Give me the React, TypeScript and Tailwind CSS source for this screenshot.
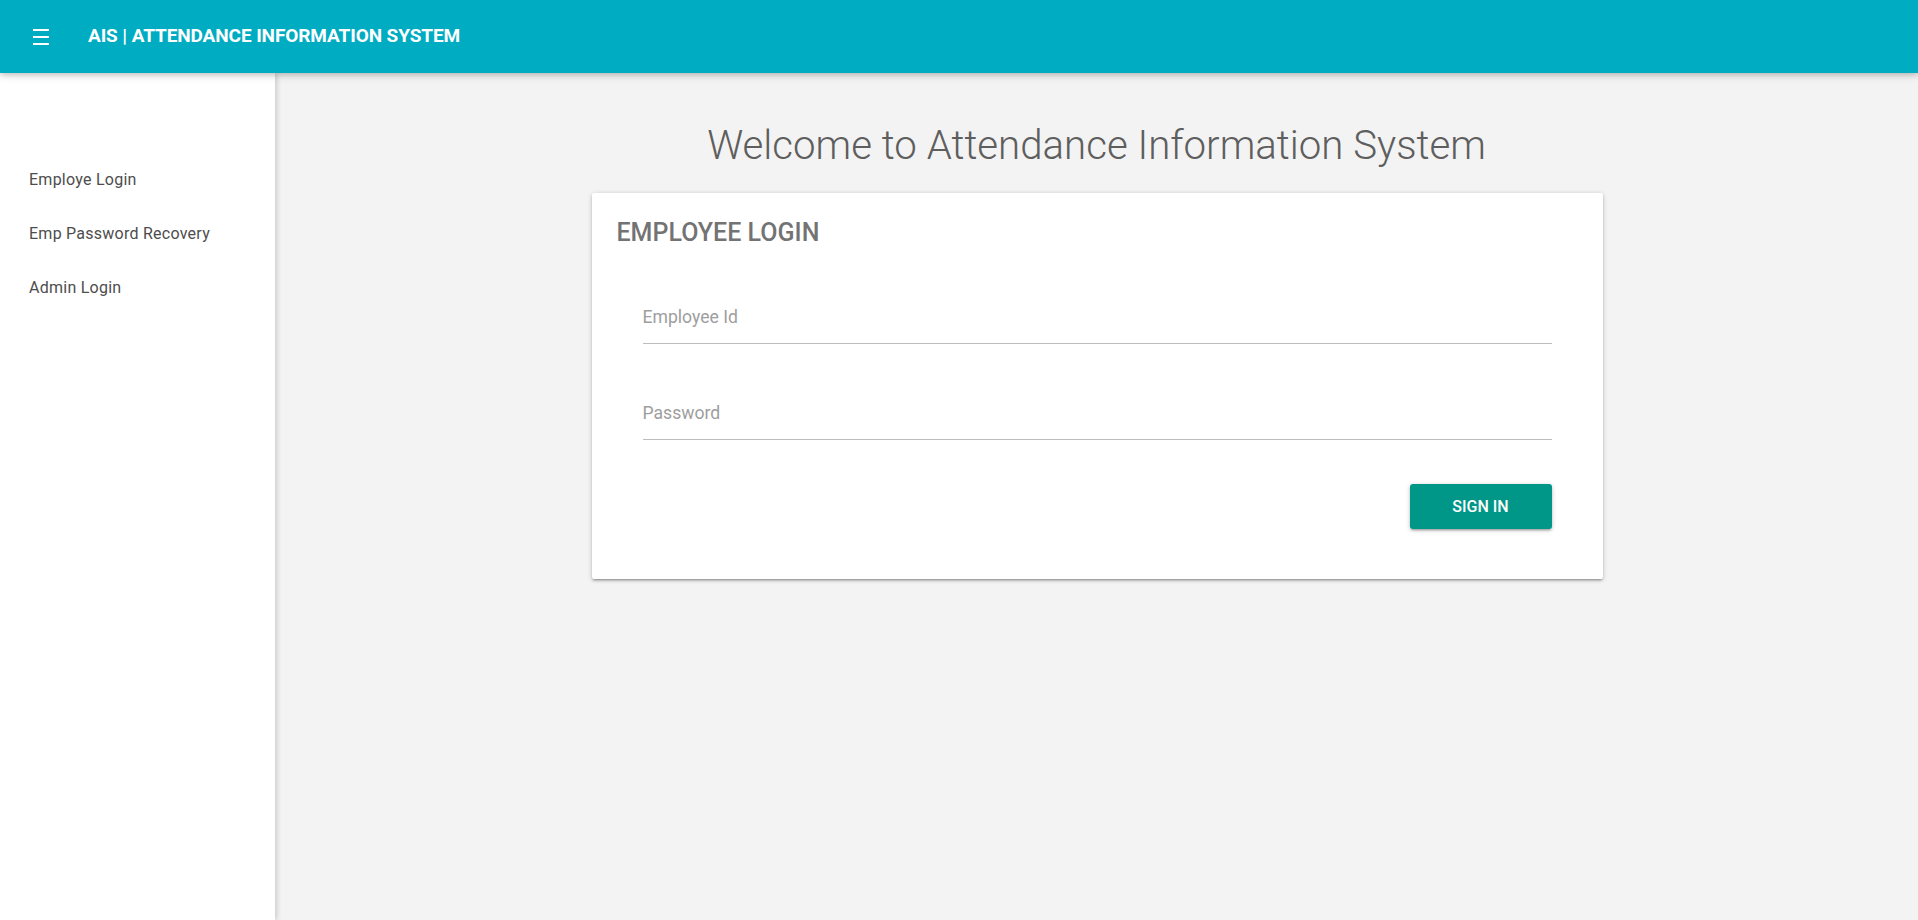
import React from "react";

export default function App() {
  return (
    <div className="min-h-screen bg-[#f3f3f3] font-['Roboto',sans-serif]">
      <header className="relative z-20 flex h-[73px] items-center bg-[#00acc1] shadow-[0_2px_5px_0_rgba(0,0,0,0.16),0_2px_10px_0_rgba(0,0,0,0.12)]">
        <div className="ml-[33px] flex w-[16px] flex-col gap-[5px]">
          <span className="block h-[2px] w-full bg-white" />
          <span className="block h-[2px] w-full bg-white" />
          <span className="block h-[2px] w-full bg-white" />
        </div>
        <div className="ml-[39px] text-[19px] font-bold tracking-[-0.1px] text-white">
          AIS | ATTENDANCE INFORMATION SYSTEM
        </div>
      </header>
      <div className="flex h-[847px]">
        <aside className="relative z-10 w-[275px] shrink-0 bg-white pt-[80px] shadow-[2px_0_5px_0_rgba(0,0,0,0.16)]">
          {["Employe Login", "Emp Password Recovery", "Admin Login"].map((t) => (
            <div
              key={t}
              className="flex h-[54px] items-center pl-[29px] text-[16px] tracking-[0.25px] text-[#4d4d4d]"
            >
              {t}
            </div>
          ))}
        </aside>
        <main className="flex flex-1 flex-col items-center">
          <h1 className="mt-[49px] text-[40.2px] font-light leading-[48px] text-[#5e5e5e]">
            Welcome to Attendance Information System
          </h1>
          <div className="ml-[1px] mt-[23px] w-[1011px] rounded-[2px] bg-white px-[25px] pb-[50px] pt-[24px] shadow-[0_2px_2px_0_rgba(0,0,0,0.14),0_3px_1px_-2px_rgba(0,0,0,0.12),0_1px_5px_0_rgba(0,0,0,0.2)]">
            <div className="text-[25px] font-medium leading-[32px] text-[#737373]">
              EMPLOYEE LOGIN
            </div>
            <div className="px-[26px]">
              <div className="mt-[49px] flex h-[46px] items-end border-b border-[#bdbdbd] pb-[16px]">
                <span className="text-[17.6px] leading-[20px] text-[#9e9e9e]">Employee Id</span>
              </div>
              <div className="mt-[50px] flex h-[46px] items-end border-b border-[#bdbdbd] pb-[16px]">
                <span className="text-[17.6px] leading-[20px] text-[#9e9e9e]">Password</span>
              </div>
              <div className="mt-[44px] flex justify-end">
                <button className="h-[45px] w-[142px] rounded-[3px] bg-[#009688] text-[16px] font-medium uppercase text-white shadow-[0_2px_2px_0_rgba(0,0,0,0.14),0_3px_1px_-2px_rgba(0,0,0,0.12),0_1px_5px_0_rgba(0,0,0,0.2)]">
                  Sign In
                </button>
              </div>
            </div>
          </div>
        </main>
      </div>
    </div>
  );
}
